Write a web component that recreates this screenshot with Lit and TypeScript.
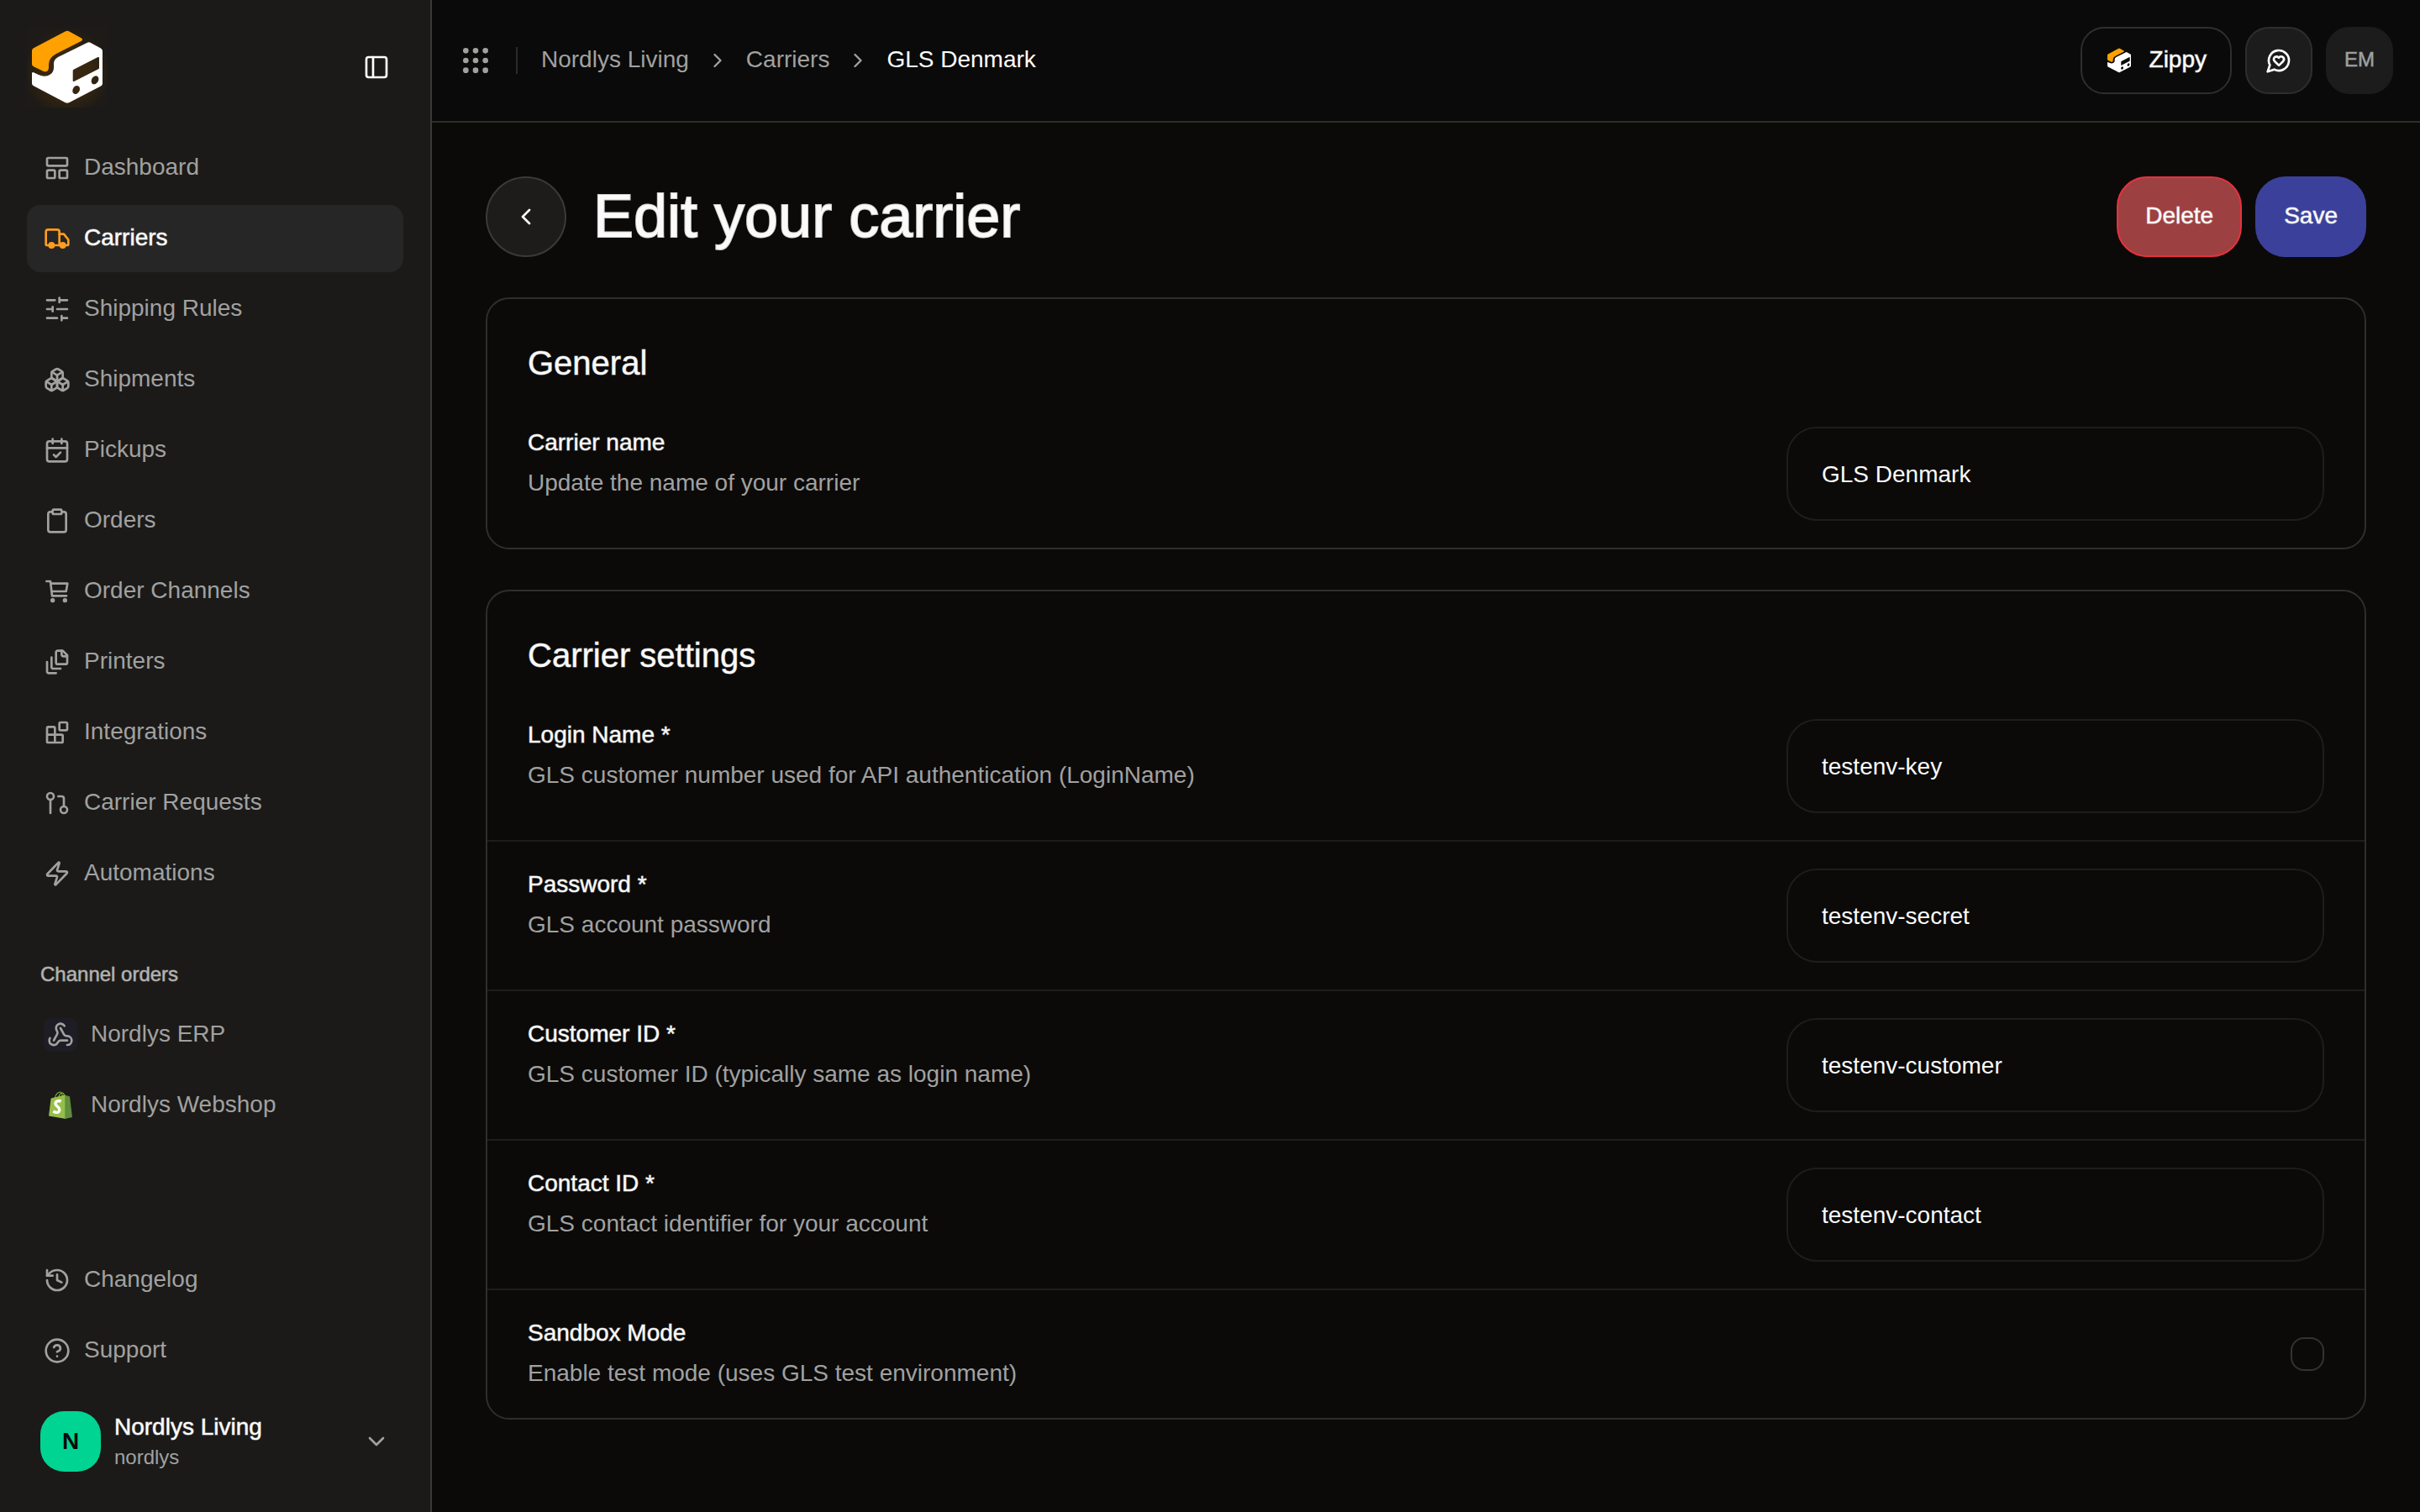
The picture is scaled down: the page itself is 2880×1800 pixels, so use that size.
import { LitElement, html, css, svg, nothing, type TemplateResult } from "lit";
import { customElement, property } from "lit/decorators.js";

/* Stroke icons on a 24-unit grid. */
const ICONS: Record<string, TemplateResult> = {
  panel: svg`<rect width="18" height="18" x="3" y="3" rx="2"/><path d="M9 3v18"/>`,
  dashboard: svg`<rect width="18" height="7" x="3" y="3" rx="1"/><rect width="7" height="7" x="3" y="14" rx="1"/><rect width="7" height="7" x="14" y="14" rx="1"/>`,
  truck: svg`<path d="M14 18V6a2 2 0 0 0-2-2H4a2 2 0 0 0-2 2v11a1 1 0 0 0 1 1h2"/><path d="M15 18H9"/><path d="M19 18h2a1 1 0 0 0 1-1v-3.65a1 1 0 0 0-.22-.624l-3.48-4.35A1 1 0 0 0 17.52 8H14"/><circle cx="17" cy="18" r="2" fill="currentColor"/><circle cx="7" cy="18" r="2" fill="currentColor"/>`,
  sliders: svg`<path d="M21 4h-7M10 4H3M21 12h-9M8 12H3M21 20h-5M12 20H3M14 2v4M8 10v4M16 18v4"/>`,
  boxes: svg`<path d="M2.97 12.92A2 2 0 0 0 2 14.63v3.24a2 2 0 0 0 .97 1.71l3 1.8a2 2 0 0 0 2.06 0L12 19v-5.5l-5-3-4.03 2.42Z"/><path d="m7 16.5-4.74-2.85"/><path d="m7 16.5 5-3"/><path d="M7 16.5v5.17"/><path d="M12 13.5V19l3.97 2.38a2 2 0 0 0 2.06 0l3-1.8a2 2 0 0 0 .97-1.71v-3.24a2 2 0 0 0-.97-1.71L17 10.5l-5 3Z"/><path d="m17 16.5-5-3"/><path d="m17 16.5 4.74-2.85"/><path d="M17 16.5v5.17"/><path d="M7.97 4.42A2 2 0 0 0 7 6.13v4.37l5 3 5-3V6.13a2 2 0 0 0-.97-1.71l-3-1.8a2 2 0 0 0-2.06 0l-3 1.8Z"/><path d="M12 8 7.26 5.15"/><path d="m12 8 4.74-2.85"/><path d="M12 13.5V8"/>`,
  calendar: svg`<path d="M8 2v4M16 2v4"/><rect width="18" height="18" x="3" y="4" rx="2"/><path d="M3 10h18"/><path d="m9 16 2 2 4-4"/>`,
  clipboard: svg`<rect width="8" height="4" x="8" y="2" rx="1"/><path d="M16 4h2a2 2 0 0 1 2 2v14a2 2 0 0 1-2 2H6a2 2 0 0 1-2-2V6a2 2 0 0 1 2-2h2"/>`,
  cart: svg`<path d="M2.500 3H6l1.500 13H20.300"/><path d="M6.300 5H21.200L20 12H7.200"/><circle cx="8" cy="20" r="1" fill="currentColor"/><circle cx="19" cy="20" r="1" fill="currentColor"/>`,
  files: svg`<path d="M21 7h-3a2 2 0 0 1-2-2V2"/><path d="M21 6v6.500c0 .8-.7 1.500-1.500 1.500h-7c-.8 0-1.500-.7-1.500-1.500v-9c0-.8.7-1.500 1.500-1.500H17Z"/><path d="M7 8v8.800c0 .3.200.6.400.8.200.2.500.4.800.4H15"/><path d="M3 12v8.800c0 .3.200.6.400.8.200.2.500.4.800.4H11"/>`,
  blocks: svg`<rect width="7" height="7" x="14" y="3" rx="1"/><path d="M10 21V8a1 1 0 0 0-1-1H4a1 1 0 0 0-1 1v12a1 1 0 0 0 1 1h12a1 1 0 0 0 1-1v-5a1 1 0 0 0-1-1H3"/>`,
  request: svg`<circle cx="18" cy="18" r="3"/><circle cx="6" cy="6" r="3"/><path d="M13 6h3a2 2 0 0 1 2 2v7"/><path d="M6 9v12"/>`,
  zap: svg`<path d="M4 14a1 1 0 0 1-.78-1.63l9.900-10.200a.5.5 0 0 1 .86.46l-1.920 6.020A1 1 0 0 0 13 10h7a1 1 0 0 1 .78 1.630l-9.900 10.200a.5.5 0 0 1-.86-.46l1.920-6.020A1 1 0 0 0 11 14z"/>`,
  history: svg`<path d="M3 12a9 9 0 1 0 9-9 9.750 9.750 0 0 0-6.740 2.740L3 8"/><path d="M3 3v5h5"/><path d="M12 7v5l4 2"/>`,
  help: svg`<circle cx="12" cy="12" r="10"/><path d="M9.090 9a3 3 0 0 1 5.830 1c0 2-3 3-3 3"/><path d="M12 17h.01"/>`,
  webhook: svg`<path d="M18 16.980h-5.990c-1.100 0-1.950.94-2.480 1.900A4 4 0 0 1 2 17c.01-.7.200-1.400.57-2"/><path d="m6 17 3.130-5.780c.53-.97.100-2.180-.5-3.100a4 4 0 1 1 6.890-4.060"/><path d="m12 6 3.130 5.730C15.660 12.700 16.900 13 18 13a4 4 0 0 1 0 8"/>`,
  down: svg`<path d="m6 9 6 6 6-6"/>`,
  right: svg`<path d="m9 18 6-6-6-6"/>`,
  left: svg`<path d="m15 18-6-6 6-6"/>`,
  grip: svg`<g fill="currentColor">${[5, 12, 19].map((y) => [5, 12, 19].map((x) => svg`<circle cx=${x} cy=${y} r="1"/>`))}</g>`,
  heart: svg`<path d="M7.900 20A9 9 0 1 0 4 16.100L2 22Z"/><path d="M15.800 9.200a2.500 2.500 0 0 0-3.500 0l-.3.400-.350-.300a2.420 2.420 0 1 0-3.200 3.600l3.600 3.500 3.600-3.500c1.200-1.200 1.100-2.700.2-3.700"/>`,
};

const icon = (name: string, size = "md") =>
  html`<svg class="icon ${size}" viewBox="0 0 24 24" aria-hidden="true">${ICONS[name]}</svg>`;

/* Isometric parcel with an orange lid; coordinates on a 96-unit grid. */
const parcel = svg`
  <path fill="#ffa100" d="M6 28.500Q6 26.300 8 25.200L45.500 5.500Q48 4.200 50.500 5.500L65 13.500Q67 15 65 16.700L34.500 32.300Q26 37 26 45V48.500Q25.500 54.500 20 53L8 47.200Q6 46.200 6 44.500Z"/>
  <path fill="#fff" fill-rule="evenodd" d="M6 55.500Q6 53.300 8 54.200L14.500 57.300Q22 60.500 28 56.500Q31.800 53.500 32 49V43Q32.500 38.500 37 36L72 18.700Q74 17.700 76 18.900L88 25.500Q90 26.700 90 28.800V67.500Q90 69.400 88 70.500L50.500 90Q48 91.200 45.500 90L8 70.300Q6 69.200 6 67.500ZM54.700 52.500Q54.700 51.300 55.700 50.800L84.500 36Q86 35.500 86 37V48.700Q86 49.700 85 50.200L56 64.900Q54.700 65.400 54.700 64ZM61.300 70.400A4 5.300 30 1 0 56 79.600A4 5.300 30 1 0 61.300 70.400ZM83.700 58.700A4 5.300 30 1 0 78.400 67.900A4 5.300 30 1 0 83.700 58.700Z"/>`;

const shopBag = html`<svg class="bag" viewBox="0 0 40 40" aria-hidden="true">
  <path fill="none" stroke="#7fae3d" stroke-width="1.200" d="M13 12C14 7 17 4 19.500 4C21.500 4 22.300 6.500 22.300 10.500M17.500 11C18.500 7 20.500 5 22.500 5.200C24 5.400 24.500 7.500 24.500 9.500"/>
  <path fill="#95bf47" d="M8.500 12.500Q8.600 11.600 9.500 11.300L25 7.600L26.500 8.300V36L6 32.500Z"/>
  <path fill="#5e8e3e" d="M25.300 7.600L28.500 8.800L30.500 9.100Q31 9.300 31.100 9.900L34 34L25.300 36Z"/>
  <path fill="none" stroke="#fff" stroke-width="3.400" d="M20.600 15.300C17.500 13.500 14 15 14 18C14 21.200 18.800 21.200 18.800 25C18.800 28.800 15 29.300 11.300 27"/>
</svg>`;

const shared = css`
  :host { display: block; font-family: "Liberation Sans", Arial, sans-serif; font-size: 28px; line-height: 40px; }
  * { box-sizing: border-box; }
  a { color: inherit; text-decoration: none; }
  button, input { font: inherit; color: inherit; margin: 0; }
  button { border: 0; background: none; padding: 0; cursor: pointer; }
  p, h1, h2, ul, ol { margin: 0; padding: 0; list-style: none; }
  svg { display: block; flex: none; }
  .icon { fill: none; stroke: currentColor; stroke-width: 2; stroke-linecap: round; stroke-linejoin: round; }
  .sm { width: 28px; height: 28px; }
  .md { width: 32px; height: 32px; }
  .lg { width: 40px; height: 40px; }
  /* Medium weight, between the family's regular and bold. */
  .medium { -webkit-text-stroke: 1px color-mix(in srgb, currentColor 55%, transparent); }
`;

@customElement("app-sidebar")
class AppSidebar extends LitElement {
  static styles = [shared, css`
    :host { display: flex; flex-direction: column; padding: 32px; background: #1b1a18; color: #a1a1a0; border-right: 2px solid #3a3938; }
    .top { display: flex; align-items: center; justify-content: space-between; padding-right: 16px; margin-bottom: 32px; }
    .logo { display: block; width: 96px; height: 96px; background: radial-gradient(circle at 50% 56%, #3a2814 0%, #35260f 42%, #1d1a17 72%); }
    .toggle { color: #fff; }
    .list { display: flex; flex-direction: column; gap: 4px; }
    .item { display: flex; align-items: center; gap: 16px; height: 80px; padding: 0 20px; border-radius: 16px; }
    .item span { padding-bottom: 2px; }
    .item.active { background: #262626; color: #fff; }
    .item.active .icon { color: #ff9d1f; }
    .heading { font-size: 24px; line-height: 32px; color: #b5b4b2; padding: 0 16px; margin: 64px 0 16px; font-weight: 400; }
    .tile { display: grid; place-items: center; width: 40px; height: 40px; border-radius: 8px; }
    .tile.hook { background: #1e1c24; }
    .bag { width: 40px; height: 40px; }
    .bottom { margin-top: auto; }
    .org { display: flex; align-items: center; gap: 16px; width: 100%; padding: 16px; margin-top: 16px; text-align: left; }
    .avatar { display: grid; place-items: center; width: 72px; height: 72px; border-radius: 28px; background: #00d492; color: #0b0a09; font-weight: 700; }
    .who { flex: 1; display: flex; flex-direction: column; }
    .who strong { color: #fff; font-weight: 400; line-height: 38px; }
    .who small { font-size: 24px; line-height: 34px; }
  `];

  private nav = [
    ["dashboard", "Dashboard"], ["truck", "Carriers"], ["sliders", "Shipping Rules"], ["boxes", "Shipments"],
    ["calendar", "Pickups"], ["clipboard", "Orders"], ["cart", "Order Channels"], ["files", "Printers"],
    ["blocks", "Integrations"], ["request", "Carrier Requests"], ["zap", "Automations"],
  ];

  private item(name: string, label: string) {
    const active = label === "Carriers";
    return html`<li><a class="item ${active ? "active medium" : ""}" href="#" aria-current=${active ? "page" : nothing}>${icon(name)}<span>${label}</span></a></li>`;
  }

  render() {
    return html`
      <div class="top">
        <a class="logo" href="#" aria-label="Home"><svg viewBox="0 0 96 96">${parcel}</svg></a>
        <button class="toggle" aria-label="Toggle sidebar">${icon("panel")}</button>
      </div>
      <nav>
        <ul class="list">${this.nav.map(([i, l]) => this.item(i, l))}</ul>
        <h2 class="heading medium">Channel orders</h2>
        <ul class="list">
          <li><a class="item" href="#"><i class="tile hook">${icon("webhook")}</i><span>Nordlys ERP</span></a></li>
          <li><a class="item" href="#"><i class="tile">${shopBag}</i><span>Nordlys Webshop</span></a></li>
        </ul>
      </nav>
      <div class="bottom">
        <ul class="list">${this.item("history", "Changelog")}${this.item("help", "Support")}</ul>
        <button class="org">
          <span class="avatar">N</span>
          <span class="who"><strong class="medium">Nordlys Living</strong><small>nordlys</small></span>
          ${icon("down")}
        </button>
      </div>`;
  }
}

@customElement("app-topbar")
class AppTopbar extends LitElement {
  static styles = [shared, css`
    :host { display: flex; align-items: center; justify-content: space-between; height: 146px; padding: 0 32px; background: #0a0a0a; border-bottom: 2px solid #2e2e2d; color: #a1a1a0; }
    .crumbs { display: flex; align-items: center; }
    .divider { width: 2px; height: 32px; background: #2b2b2a; margin: 0 28px; }
    ol { display: flex; align-items: center; gap: 20px; }
    li { display: flex; align-items: center; gap: 20px; }
    li > span, li > a, .chip > span { padding-bottom: 2px; }
    .here { color: #fff; }
    .actions { display: flex; gap: 16px; }
    .chip { display: flex; align-items: center; justify-content: center; width: 80px; height: 80px; border: 2px solid #2e2e2d; border-radius: 28px; background: #1c1c1c; color: #fff; }
    .chip.zippy { width: auto; padding: 0 28px; gap: 20px; background: none; }
    .chip.user { border-color: #1c1c1c; color: #a1a1a0; font-size: 24px; }
  `];

  render() {
    return html`
      <div class="crumbs">
        <button aria-label="Apps">${icon("grip", "lg")}</button>
        <span class="divider"></span>
        <nav aria-label="Breadcrumb"><ol>
          <li><a href="#">Nordlys Living</a>${icon("right", "sm")}</li>
          <li><a href="#">Carriers</a>${icon("right", "sm")}</li>
          <li class="here" aria-current="page"><span>GLS Denmark</span></li>
        </ol></nav>
      </div>
      <div class="actions">
        <button class="chip zippy"><svg class="md" viewBox="0 0 96 96" aria-hidden="true">${parcel}</svg><span class="medium">Zippy</span></button>
        <button class="chip" aria-label="Feedback">${icon("heart")}</button>
        <button class="chip user"><span class="medium">EM</span></button>
      </div>`;
  }
}

interface Field { id: string; label: string; hint: string; value?: string }

@customElement("settings-card")
class SettingsCard extends LitElement {
  static styles = [shared, css`
    :host { border: 2px solid #2e2e2d; border-radius: 28px; overflow: hidden; }
    h2 { font-size: 40px; line-height: 56px; font-weight: 400; padding: 48px 48px 16px; }
    .row { display: flex; align-items: flex-start; justify-content: space-between; gap: 48px; padding: 32px 48px; }
    .row + .row { border-top: 2px solid #1e1d1c; }
    .row.toggle { align-items: center; }
    .text { display: flex; flex-direction: column; gap: 10px; padding-bottom: 2px; line-height: 38px; }
    .hint { color: #a1a1a0; }
    .box { width: 640px; height: 112px; padding: 2px 40px 0; border: 2px solid #1e1d1c; border-radius: 36px; background: transparent; outline: none; }
    .check { appearance: none; width: 40px; height: 40px; border: 2px solid #333332; border-radius: 16px; }
  `];

  @property() heading = "";
  @property({ attribute: false }) fields: Field[] = [];

  render() {
    return html`<section>
      <h2 class="medium">${this.heading}</h2>
      ${this.fields.map((f) => html`
        <div class="row ${f.value === undefined ? "toggle" : ""}">
          <div class="text"><label class="medium" for=${f.id}>${f.label}</label><p class="hint">${f.hint}</p></div>
          ${f.value === undefined
            ? html`<input class="check" id=${f.id} type="checkbox">`
            : html`<input class="box" id=${f.id} type="text" .value=${f.value}>`}
        </div>`)}
    </section>`;
  }
}

@customElement("app-root")
class AppRoot extends LitElement {
  static styles = [shared, css`
    :host { display: grid; grid-template-columns: 514px minmax(0, 1fr); min-height: 100vh; background: #0b0a09; color: #fafafa; }
    main { display: flex; flex-direction: column; gap: 48px; padding: 64px; }
    .head { display: flex; align-items: center; gap: 32px; }
    .back { display: grid; place-items: center; width: 96px; height: 96px; border: 2px solid #3a3a39; border-radius: 50%; background: #1d1c1b; }
    h1 { flex: 1; font-size: 72px; line-height: 94px; padding-bottom: 2px; font-weight: 400; }
    h1.medium { -webkit-text-stroke: 2px color-mix(in srgb, currentColor 80%, transparent); }
    .buttons { display: flex; gap: 16px; }
    .btn { height: 96px; padding: 0 32px 2px; border: 2px solid #3b419b; border-radius: 36px; background: #3b419b; }
    .btn.danger { background: #9d4042; border-color: #e7323c; }
  `];

  private general: Field[] = [
    { id: "name", label: "Carrier name", hint: "Update the name of your carrier", value: "GLS Denmark" },
  ];

  private settings: Field[] = [
    { id: "login", label: "Login Name *", hint: "GLS customer number used for API authentication (LoginName)", value: "testenv-key" },
    { id: "password", label: "Password *", hint: "GLS account password", value: "testenv-secret" },
    { id: "customer", label: "Customer ID *", hint: "GLS customer ID (typically same as login name)", value: "testenv-customer" },
    { id: "contact", label: "Contact ID *", hint: "GLS contact identifier for your account", value: "testenv-contact" },
    { id: "sandbox", label: "Sandbox Mode", hint: "Enable test mode (uses GLS test environment)" },
  ];

  render() {
    return html`
      <app-sidebar></app-sidebar>
      <div>
        <app-topbar></app-topbar>
        <main>
          <div class="head">
            <button class="back" aria-label="Back">${icon("left")}</button>
            <h1 class="medium">Edit your carrier</h1>
            <div class="buttons">
              <button class="btn danger medium">Delete</button>
              <button class="btn medium">Save</button>
            </div>
          </div>
          <settings-card heading="General" .fields=${this.general}></settings-card>
          <settings-card heading="Carrier settings" .fields=${this.settings}></settings-card>
        </main>
      </div>`;
  }
}
